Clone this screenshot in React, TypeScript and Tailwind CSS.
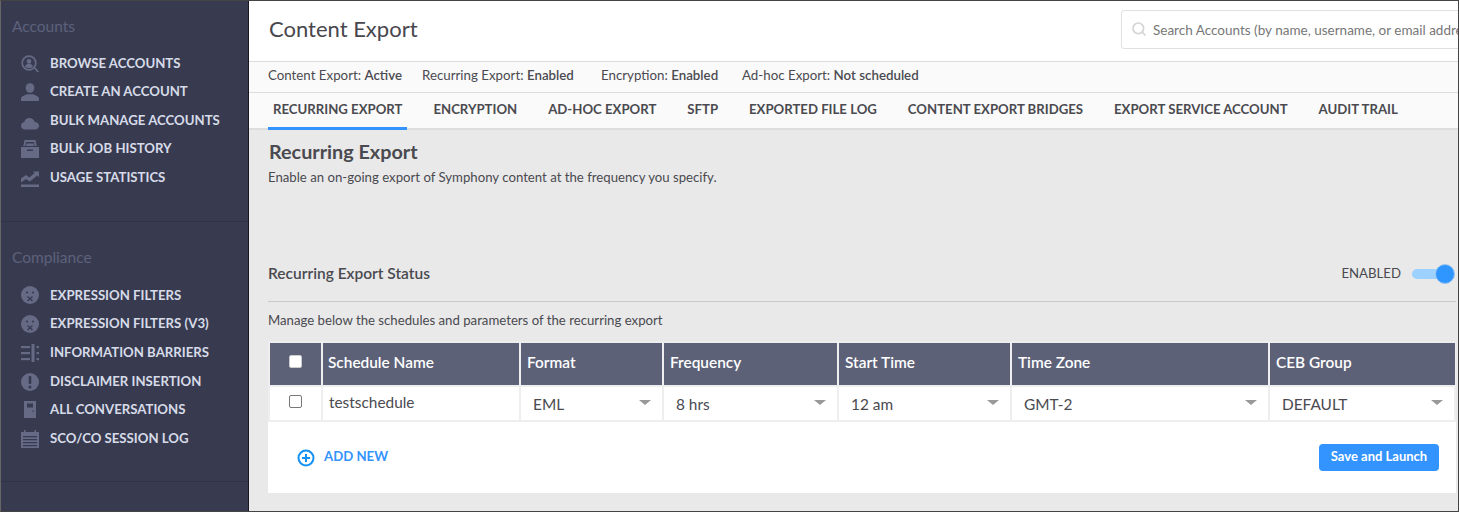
import { Search } from 'lucide-react'
import type { ReactNode } from 'react'

const ic = 'w-[18px] h-[18px] text-[#666a85] fill-current shrink-0'

const BrowseIcon = () => (
  <svg viewBox="0 0 18 18" className={ic}>
    <circle cx="8" cy="8" r="6.8" fill="none" stroke="currentColor" strokeWidth="1.7" />
    <circle cx="8" cy="6.4" r="2.3" />
    <path d="M4 11.6c.5-2 2-2.6 4-2.6s3.500.6 4 2.600c-1 1-2.500 1.500-4 1.500s-3-.5-4-1.500z" />
    <path d="M12.600 13l1.200-1 4.200 4.600-1.400 1z" />
  </svg>
)
const PersonIcon = () => (
  <svg viewBox="0 0 18 18" className={ic}>
    <ellipse cx="9" cy="5" rx="4.300" ry="4.800" />
    <path d="M0 18v-2.500c0-2 2.500-3 6-4.300h6c3.500 1.300 6 2.300 6 4.300V18z" />
  </svg>
)
const CloudIcon = () => (
  <svg viewBox="0 0 18 18" className={ic}>
    <path d="M4 17.500c-2.400 0-4-1.700-4-3.700 0-2 1.400-3.400 3.200-3.600C3.800 7.600 6 6 8.500 6c2.600 0 4.700 1.700 5.200 4 2.500.1 4.300 1.700 4.300 3.800 0 2-1.700 3.700-4 3.700z" />
  </svg>
)
const ArchiveIcon = () => (
  <svg viewBox="0 0 18 18" className={ic}>
    <path d="M3.500 0h11l1.200 6h-2L13 2H5l-.7 4h-2z" />
    <path d="M5.500 3.500h7l.4 2.500H5.100z" />
    <path fillRule="evenodd" d="M0 7h18v11H0zM6 9.500v1.500h6V9.500z" />
  </svg>
)
const ChartIcon = () => (
  <svg viewBox="0 0 18 18" className={ic}>
    <path d="M0 9.500l5-3.500 3.500 2.500L13.500 4 12 2.500h6v5.500l-1.700-1.600-7.500 6.200L5 10l-5 3.500z" />
    <rect x="0" y="15.500" width="18" height="2.500" />
  </svg>
)
const FaceIcon = () => (
  <svg viewBox="0 0 18 18" className={ic}>
    <circle cx="9" cy="9" r="9" />
    <circle cx="6" cy="6.500" r="1.100" fill="#383b50" />
    <circle cx="12" cy="6.500" r="1.100" fill="#383b50" />
    <path d="M6.500 10.500l5 4.500M11.500 10.500l-5 4.500" stroke="#383b50" strokeWidth="1.300" />
  </svg>
)
const BarrierIcon = () => (
  <svg viewBox="0 0 18 18" className={ic}>
    <rect x="0" y="2" width="9" height="2.200" />
    <rect x="0" y="8" width="9" height="2.200" />
    <rect x="0" y="14" width="9" height="2.200" />
    <rect x="10.500" y="0" width="3" height="18" />
    <rect x="15.500" y="2" width="2.500" height="2.200" />
    <rect x="15.500" y="8" width="2.500" height="2.200" />
    <rect x="15.500" y="14" width="2.500" height="2.200" />
  </svg>
)
const AlertIcon = () => (
  <svg viewBox="0 0 18 18" className={ic}>
    <circle cx="9" cy="9" r="9" />
    <rect x="7.700" y="3" width="2.600" height="8" rx="1" fill="#383b50" />
    <circle cx="9" cy="14" r="1.500" fill="#383b50" />
  </svg>
)
const DoorIcon = () => (
  <svg viewBox="0 0 18 18" className={ic}>
    <path fillRule="evenodd" d="M3 0h12v17H3zM6 2.500v4h6v-4zM11.500 9.500v1.300h1.500V9.500z" />
  </svg>
)
const LogIcon = () => (
  <svg viewBox="0 0 18 18" className={ic}>
    <path fillRule="evenodd" d="M0 2h3V0h1.500v2h9V0H15v2h3v16H0zM2 6v1.300h14V6zM2 9v1.300h14V9zM2 12v1.300h14V12zM2 15v1.300h14V15z" />
  </svg>
)

const accounts: [string, ReactNode][] = [
  ['Browse Accounts', <BrowseIcon />],
  ['Create an Account', <PersonIcon />],
  ['Bulk Manage Accounts', <CloudIcon />],
  ['Bulk Job History', <ArchiveIcon />],
  ['Usage Statistics', <ChartIcon />],
]

const compliance: [string, ReactNode][] = [
  ['Expression Filters', <FaceIcon />],
  ['Expression Filters (V3)', <FaceIcon />],
  ['Information Barriers', <BarrierIcon />],
  ['Disclaimer Insertion', <AlertIcon />],
  ['All Conversations', <DoorIcon />],
  ['SCO/CO Session Log', <LogIcon />],
]

const tabs = ['Recurring Export', 'Encryption', 'Ad-hoc Export', 'SFTP', 'Exported File Log', 'Content Export Bridges', 'Export Service Account', 'Audit Trail']

const statuses = [
  { label: 'Content Export:', value: 'Active', w: 'w-[154px]' },
  { label: 'Recurring Export:', value: 'Enabled', w: 'w-[179px]' },
  { label: 'Encryption:', value: 'Enabled', w: 'w-[141px]' },
  { label: 'Ad-hoc Export:', value: 'Not scheduled', w: 'w-[200px]' },
]

const columns = [
  { name: 'Schedule Name', value: 'testschedule', w: 'w-[198px]', text: true },
  { name: 'Format', value: 'EML', w: 'w-[143px]' },
  { name: 'Frequency', value: '8 hrs', w: 'w-[175px]' },
  { name: 'Start Time', value: '12 am', w: 'w-[173px]' },
  { name: 'Time Zone', value: 'GMT-2', w: 'w-[258px]' },
  { name: 'CEB Group', value: 'DEFAULT', w: 'w-[184px]' },
]

function NavGroup({ title, items, box, gap, row }: { title: string; items: [string, ReactNode][]; box: string; gap: string; row: string }) {
  return (
    <div className={`${box} border-b border-[#30324a] pl-[11px] pt-[15px]`}>
      <h3 className={`text-[15.500px] leading-[20px] text-[#5d617c] ${gap}`}>{title}</h3>
      <ul className="pl-[9px]">
        {items.map(([label, icon]) => (
          <li key={label} className={`${row} flex items-center gap-[11px]`}>
            {icon}
            <span className="text-[13.200px] font-bold uppercase text-[#d7dbe8] whitespace-nowrap">{label}</span>
          </li>
        ))}
      </ul>
    </div>
  )
}

export default function App() {
  return (
    <div className="w-[1459px] h-[512px] overflow-hidden flex border border-[#444] border-l-[#666] font-['Lato',sans-serif] text-[#4a4a50]">
      {/* Sidebar */}
      <aside className="w-[248px] shrink-0 bg-[#383b50] border-r border-[#16171f]">
        <NavGroup title="Accounts" items={accounts} box="h-[221px]" gap="mb-[13.350px]" row="h-[28.500px]" />
        <div className="pt-[10px]">
          <NavGroup title="Compliance" items={compliance} box="h-[250px]" gap="mb-[14.150px]" row="h-[28.700px]" />
        </div>
      </aside>

      <main className="flex-1 min-w-0 bg-[#e9e9e9]">
        {/* Header */}
        <div className="h-[61px] bg-white border-b border-[#dcdcdc] flex items-center justify-between pl-[20px]">
          <h1 className="text-[22px] text-[#47474d] mb-[6px]">Content Export</h1>
          <div className="w-[340px] h-[39px] -mr-[3px] mt-[-4px] border border-[#e0e0e0] rounded-l-[3px] flex items-center pl-[9px] gap-[6px] overflow-hidden">
            <Search strokeWidth={2.5} className="w-[16px] h-[16px] text-[#d4d4d4] shrink-0" />
            <span className="text-[13.500px] text-[#777] whitespace-nowrap pt-[2px]">Search Accounts (by name, username, or email address)</span>
          </div>
        </div>

        {/* Status */}
        <div className="h-[31px] bg-[#fafafa] border-b border-[#dcdcdc] flex items-center pl-[19px] pb-[2px] text-[13.300px]">
          {statuses.map(s => (
            <div key={s.label} className={`${s.w} whitespace-nowrap`}>
              {s.label} <span className="font-semibold">{s.value}</span>
            </div>
          ))}
        </div>

        {/* Tabs */}
        <div className="h-[37px] bg-[#fafafa] border-b-2 border-[#dedede] flex pl-[19px] gap-[21px]">
          {tabs.map((t, i) => (
            <div
              key={t}
              className={`h-[37px] px-[5px] pt-[7px] text-[13.180px] font-bold uppercase whitespace-nowrap ${i === 0 ? 'border-b-[3px] border-[#3393ff]' : ''}`}
            >
              {t}
            </div>
          ))}
        </div>

        {/* Recurring export */}
        <section className="pl-[19px] pr-[2px]">
          <h2 className="text-[19.800px] font-bold leading-[24px] mt-[9px] ml-[1px]">Recurring Export</h2>
          <p className="text-[13.200px] leading-[18px] mt-[5px]">Enable an on-going export of Symphony content at the frequency you specify.</p>

          <div className="mt-[75px] h-[41px] border-b border-[#c9c9c9] flex items-start justify-between">
            <span className="text-[15.500px] font-semibold mt-[1px]">Recurring Export Status</span>
            <div className="flex items-center gap-[11px] mt-[3px]">
              <span className="text-[13.200px]">ENABLED</span>
              <div className="relative w-[44px] h-[10px]">
                <div className="absolute left-0 top-0 w-[40px] h-[10px] rounded-full bg-[#9dd1ff]" />
                <div className="absolute right-[1px] top-[-5px] w-[20px] h-[20px] rounded-full bg-[#2f95ff] border border-[#9dc7f0]" />
              </div>
            </div>
          </div>

          <p className="text-[13.200px] leading-[18px] mt-[9px]">Manage below the schedules and parameters of the recurring export</p>

          <div className="mt-[12px] w-[1188px] bg-white">
            <div className="bg-[#eeeeee] p-[2px] pr-[1px]">
              {/* Header row */}
              <div className="flex h-[42px] bg-[#5d6178] text-white text-[15.400px] font-semibold">
                <div className="w-[53px] border-r-2 border-[#eee] flex justify-center pt-[12px] pr-[1px]">
                  <span className="w-[13px] h-[13px] bg-white rounded-[2px] border border-[#ccc]" />
                </div>
                {columns.map((c, i) => (
                  <div key={c.name} className={`${c.w} border-r-2 border-[#eee] last:border-r-0 ${i === 0 ? 'pl-[5px]' : 'pl-[6px]'} pb-[2px] flex items-center`}>
                    {c.name}
                  </div>
                ))}
              </div>
              {/* Data row */}
              <div className="flex h-[33px] mt-[2px] gap-[2px] text-[15.400px]">
                <div className="w-[51px] bg-white flex justify-center pt-[8px] pr-[1px]">
                  <span className="w-[13px] h-[13px] bg-white rounded-[2px] border border-[#777]" />
                </div>
                {columns.map(c => (
                  <div key={c.name} className={`${c.w} -mr-[2px] pr-[2px] last:mr-0 last:pr-0`}>
                    <div className="h-full bg-white pl-[6px] flex items-center justify-between pr-[11px]">
                      {c.text ? (
                        <span className="mt-[-1px]">{c.value}</span>
                      ) : (
                        <>
                          <span className="pl-[6px] mt-[3px]">{c.value}</span>
                          <span className="w-0 h-0 border-x-[6px] border-x-transparent border-t-[5px] border-t-[#999] mt-[-3px]" />
                        </>
                      )}
                    </div>
                  </div>
                ))}
              </div>
            </div>

            <div className="h-[71px] flex items-center justify-between pl-[29px] pr-[17px]">
              <div className="flex items-center gap-[9px] text-[#3393ff]">
                <svg viewBox="0 0 18 18" className="w-[18px] h-[18px] fill-none stroke-[#1592f5] stroke-2">
                  <circle cx="9" cy="9" r="7.500" />
                  <path d="M9 5v8M5 9h8" />
                </svg>
                <span className="text-[13.200px] font-bold mt-[-2px]">ADD NEW</span>
              </div>
              <button className="w-[120px] h-[27px] bg-[#3393ff] rounded-[4px] text-white text-[13px] font-bold mt-[-1px]">Save and Launch</button>
            </div>
          </div>
        </section>
      </main>
    </div>
  )
}
